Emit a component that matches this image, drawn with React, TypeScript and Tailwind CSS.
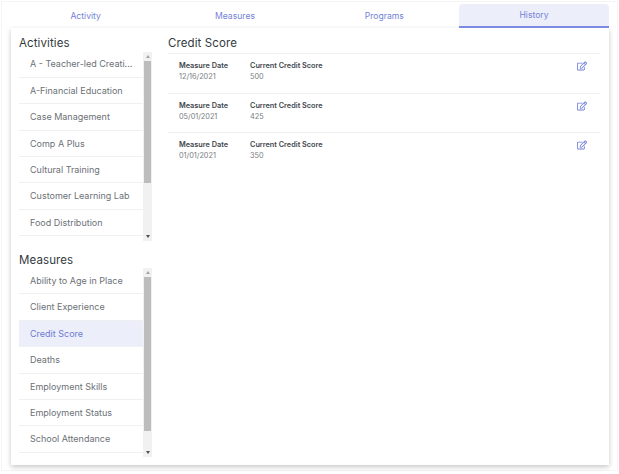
import { FaRegEdit } from "react-icons/fa";

const TABS = ["Activity", "Measures", "Programs", "History"];
const ACTIVITIES = [
  "A - Teacher-led Creati...",
  "A-Financial Education",
  "Case Management",
  "Comp A Plus",
  "Cultural Training",
  "Customer Learning Lab",
  "Food Distribution",
];
const MEASURES = [
  "Ability to Age in Place",
  "Client Experience",
  "Credit Score",
  "Deaths",
  "Employment Skills",
  "Employment Status",
  "School Attendance",
];
const HISTORY = [
  { date: "12/16/2021", score: "500" },
  { date: "05/01/2021", score: "425" },
  { date: "01/01/2021", score: "350" },
];

function PickList({ title, items, active, thumbClass }: { title: string; items: string[]; active?: string; thumbClass: string }) {
  return (
    <div>
      <h2 className="h-[16.5px] text-[11.5px] leading-[16px] tracking-[0.1px] text-[#333a40]">{title}</h2>
      <div className="flex h-[189px]">
        <ul className="w-[124px]">
          {items.map((item) => (
            <li
              key={item}
              className={`flex h-[26.4px] items-center border-b border-[#eff0f2] pl-[11px] text-[9px] whitespace-nowrap ${
                item === active ? "bg-[#eceffa] text-[#6d7bd3]" : "text-[#6c7176]"
              }`}
            >
              {item}
            </li>
          ))}
        </ul>
        <div className="flex w-[9px] flex-col items-center bg-[#f1f1f1]">
          <div className="flex h-[9px] items-center justify-center">
            <div className="size-0 border-x-[2.5px] border-b-[3px] border-x-transparent border-b-[#a3a3a3]" />
          </div>
          <div className={`w-[7px] bg-[#bcbcbc] ${thumbClass}`} />
          <div className="mt-auto flex h-[9px] items-center justify-center">
            <div className="size-0 border-x-[2.5px] border-t-[3px] border-x-transparent border-t-[#505050]" />
          </div>
        </div>
      </div>
    </div>
  );
}

export default function App() {
  return (
    <div className="h-[474px] w-[619px] bg-white pt-[1px] pl-[1px] font-['Inter','Noto_Sans',sans-serif]">
      <div className="h-[470px] w-[617px] border border-[#f5f5f5] pt-[2px] pl-[9px]">
        {/* Tabs */}
        <div className="flex h-[24px] w-[598px]">
          {TABS.map((tab) => (
            <div
              key={tab}
              className={`flex items-center justify-center text-[8.6px] text-[#7482d6] ${
                tab === "History" ? "w-[150px] flex-none rounded-t border-b-2 border-[#7c8ae2] bg-[#eceffa] pt-[1px]" : "flex-1"
              }`}
            >
              {tab}
            </div>
          ))}
        </div>

        {/* Card */}
        <div className="flex h-[437px] w-[598px] bg-white pt-[7px] pr-[9px] pl-[8px] shadow-[0_2px_5px_rgba(0,0,0,0.22)]">
          <div className="flex w-[149px] flex-col gap-[11px]">
            <PickList title="Activities" items={ACTIVITIES} thumbClass="h-[122px]" />
            <PickList title="Measures" items={MEASURES} active="Credit Score" thumbClass="h-[154px]" />
          </div>
          <div className="flex-1">
            <h2 className="h-[19px] border-b border-[#eeeff1] text-[11.5px] leading-[16px] tracking-[0.1px] text-[#333a40]">Credit Score</h2>
            {HISTORY.map((row) => (
              <div key={row.date} className="flex h-[39.5px] items-start border-b border-[#eeeff1] pt-[6px] pr-[13px] pl-[11px] last:border-b-0">
                <div className="w-[71px]">
                  <div className="text-[7.3px] leading-[12px] font-semibold text-[#42474c]">Measure Date</div>
                  <div className="text-[7.3px] leading-[10px] text-[#777c81]">{row.date}</div>
                </div>
                <div>
                  <div className="text-[7.3px] leading-[12px] font-semibold text-[#42474c]">Current Credit Score</div>
                  <div className="text-[7.3px] leading-[10px] text-[#777c81]">{row.score}</div>
                </div>
                <FaRegEdit className="mt-[1px] ml-auto text-[10px] text-[#6f7fd8]" />
              </div>
            ))}
          </div>
        </div>
      </div>
    </div>
  );
}
